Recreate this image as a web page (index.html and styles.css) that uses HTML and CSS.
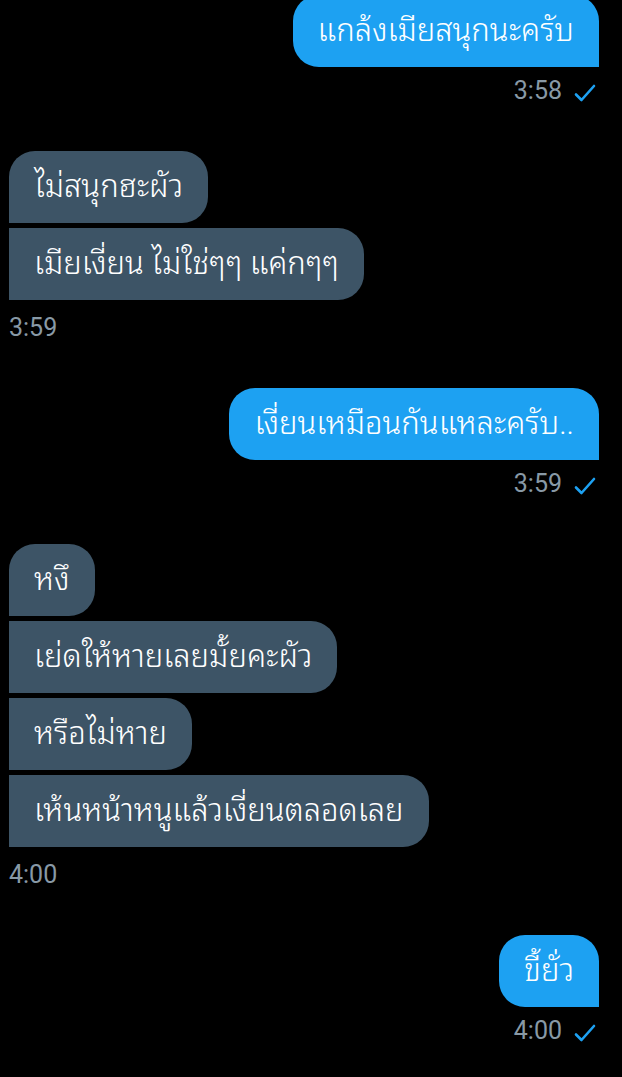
FILE: index.html
```html
<!DOCTYPE html>
<html lang="th">
<head>
  <meta charset="UTF-8" />
  <meta name="viewport" content="width=device-width, initial-scale=1.0"/>
  <title>Messages</title>
  <link rel="stylesheet" href="styles.css">
</head>
<body>

<div class="chat">

  <div class="group sent">
    <div class="bubble">แกล้งเมียสนุกนะครับ</div>
    <div class="meta">
      <span class="time">3:58</span>
      <svg class="tick" viewBox="0 0 22 18" width="22" height="18"><path d="M2 10.5 L7.5 16 L20 2" /></svg>
    </div>
  </div>

  <div class="group received">
    <div class="bubble first">ไม่สนุกฮะผัว</div>
    <div class="bubble">เมียเงี่ยน ไม่ใช่ๆๆ แค่กๆๆ</div>
    <div class="meta"><span class="time">3:59</span></div>
  </div>

  <div class="group sent">
    <div class="bubble">เงี่ยนเหมือนกันแหละครับ..</div>
    <div class="meta">
      <span class="time">3:59</span>
      <svg class="tick" viewBox="0 0 22 18" width="22" height="18"><path d="M2 10.5 L7.5 16 L20 2" /></svg>
    </div>
  </div>

  <div class="group received">
    <div class="bubble first">หงึ</div>
    <div class="bubble">เย่ดให้หายเลยมั้ยคะผัว</div>
    <div class="bubble">หรือไม่หาย</div>
    <div class="bubble">เห้นหน้าหนูแล้วเงี่ยนตลอดเลย</div>
    <div class="meta"><span class="time">4:00</span></div>
  </div>

  <div class="group sent">
    <div class="bubble">ขี้ยั่ว</div>
    <div class="meta">
      <span class="time">4:00</span>
      <svg class="tick" viewBox="0 0 22 18" width="22" height="18"><path d="M2 10.5 L7.5 16 L20 2" /></svg>
    </div>
  </div>

</div>

</body>
</html>
```

FILE: styles.css
```css
body { margin: 0; background: #000; font-family: Roboto, "Noto Sans Thai Looped", sans-serif; overflow: hidden; }

.chat { display: flex; flex-direction: column; padding: 0 23px 0 9px; margin-top: -5px; }

.group { display: flex; flex-direction: column; gap: 5px; margin-bottom: 46px; }
.group.sent { align-items: flex-end; }
.group.received { align-items: flex-start; }

.bubble { color: #fff; font-size: 31px; font-weight: 300; line-height: 34px; height: 34px; padding: 19px 25px; white-space: nowrap; }
.sent .bubble { background: #1da1f2; border-radius: 26px 26px 0 26px; }
.received .bubble { background: #3d5466; border-radius: 0 26px 26px 0; }
.received .bubble.first { border-radius: 26px 26px 26px 0; }

.meta { display: flex; align-items: center; gap: 12px; height: 28px; margin-top: 5px; }
.received .meta { margin-top: 9px; }
.time { color: #8899a6; font-size: 25px; line-height: 28px; }
.tick { margin-top: 3px; margin-right: 3px; }
.tick path { fill: none; stroke: #1da1f2; stroke-width: 2.6; stroke-linecap: round; stroke-linejoin: round; }
```
